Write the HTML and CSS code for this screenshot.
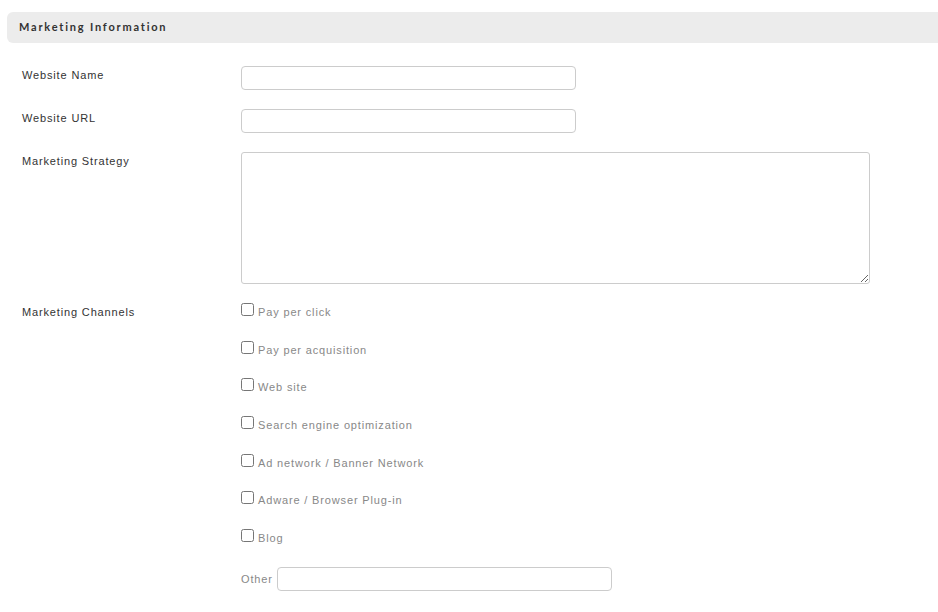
FILE: index.html
```html
<!DOCTYPE html>
<html>
<head>
    <title>Marketing Information</title>
    <link rel="stylesheet" href="styles.css">
</head>
<body>
    <div class="section-title">Marketing Information</div>
    <form class="info-form">
        <div class="form-row">
            <label for="siteName" class="row-label">Website Name</label>
            <input type="text" id="siteName" class="text-input">
        </div>
        <div class="form-row">
            <label for="siteUrl" class="row-label">Website URL</label>
            <input type="text" id="siteUrl" class="text-input">
        </div>
        <div class="form-row">
            <label for="strategy" class="row-label">Marketing Strategy</label>
            <textarea id="strategy" class="text-area"></textarea>
        </div>
        <div class="form-row">
            <label class="row-label">Marketing Channels</label>
            <div class="channels">
                <label class="channel"><input type="checkbox" name="channel" value="ppc"><span>Pay per click</span></label>
                <label class="channel"><input type="checkbox" name="channel" value="ppa"><span>Pay per acquisition</span></label>
                <label class="channel"><input type="checkbox" name="channel" value="site"><span>Web site</span></label>
                <label class="channel"><input type="checkbox" name="channel" value="seo"><span>Search engine optimization</span></label>
                <label class="channel"><input type="checkbox" name="channel" value="ads"><span>Ad network / Banner Network</span></label>
                <label class="channel"><input type="checkbox" name="channel" value="adware"><span>Adware / Browser Plug-in</span></label>
                <label class="channel"><input type="checkbox" name="channel" value="blog"><span>Blog</span></label>
                <div class="channel-other">
                    <label for="otherChannel">Other</label>
                    <input type="text" id="otherChannel" class="text-input">
                </div>
            </div>
        </div>
    </form>
</body>
</html>
```

FILE: styles.css
```css
body {
    margin: 0;
    padding-top: 12px;
    font-family: "Liberation Sans", Arial, sans-serif;
    font-size: 11px;
    letter-spacing: 0.85px;
    color: #333;
    background-color: #fff;
}
.section-title {
    margin-left: 7px;
    height: 31px;
    line-height: 30px;
    padding-left: 12px;
    background-color: #ececec;
    border-radius: 6px 0 0 6px;
    font-family: Lato, "Liberation Sans", sans-serif;
    font-weight: bold;
    font-size: 11px;
    letter-spacing: 1.8px;
    color: #333;
}
.info-form {
    padding: 23px 0 0 22px;
}
.form-row {
    display: flex;
    align-items: flex-start;
    margin-bottom: 19px;
}
.row-label {
    width: 219px;
    flex-shrink: 0;
    line-height: 16px;
    padding-top: 1px;
}
.text-input {
    box-sizing: border-box;
    width: 335px;
    height: 24px;
    margin: 0;
    border: 1px solid #ccc;
    border-radius: 4px;
    padding: 2px 6px;
}
.text-area {
    box-sizing: border-box;
    width: 629px;
    height: 132px;
    margin: 0;
    border: 1px solid #ccc;
    border-radius: 3px;
}
.channels {
    display: flex;
    flex-direction: column;
}
.channel {
    display: flex;
    align-items: flex-start;
    height: 17.7px;
    margin-bottom: 20px;
    line-height: 19px;
    color: #888;
}
.channel input {
    width: 13px;
    height: 13px;
    margin: 0 4px 0 0;
}
.channel-other {
    display: flex;
    align-items: center;
    gap: 4px;
    color: #888;
}
```
